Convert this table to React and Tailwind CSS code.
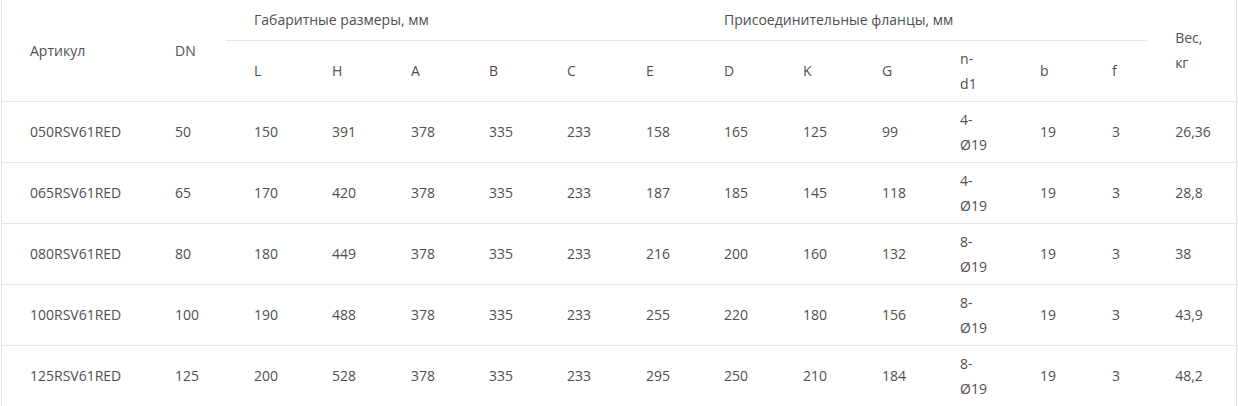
const widths = [145, 79, 78, 79, 78, 78, 79, 78, 79, 79, 78, 80, 72, 63, 89]

const rows = [
  ['050RSV61RED', '50', '150', '391', '378', '335', '233', '158', '165', '125', '99', '4-Ø19', '19', '3', '26,36'],
  ['065RSV61RED', '65', '170', '420', '378', '335', '233', '187', '185', '145', '118', '4-Ø19', '19', '3', '28,8'],
  ['080RSV61RED', '80', '180', '449', '378', '335', '233', '216', '200', '160', '132', '8-Ø19', '19', '3', '38'],
  ['100RSV61RED', '100', '190', '488', '378', '335', '233', '255', '220', '180', '156', '8-Ø19', '19', '3', '43,9'],
  ['125RSV61RED', '125', '200', '528', '378', '335', '233', '295', '250', '210', '184', '8-Ø19', '19', '3', '48,2'],
]

const subCols = ['L', 'H', 'A', 'B', 'C', 'E', 'D', 'K', 'G', 'n-d1', 'b', 'f']

const cell = 'px-7 text-left align-middle font-normal'

export default function App() {
  return (
    <div className="w-[1238px] h-[406px] overflow-hidden bg-white font-['Open_Sans',sans-serif] text-[14px] leading-[25px] text-[#4f4f4f]">
      <div className="ml-px w-[1236px] border-x border-[#e6e6e6]">
        <table className="w-[1234px] table-fixed border-collapse">
          <colgroup>
            {widths.map((w, i) => (
              <col key={i} style={{ width: w }} />
            ))}
          </colgroup>
          <thead>
            <tr>
              <th rowSpan={2} className={cell}>Артикул</th>
              <th rowSpan={2} className={cell}>DN</th>
              <th colSpan={6} className={`${cell} h-[40px] border-b border-[#e6e6e6]`}>
                Габаритные размеры, мм
              </th>
              <th colSpan={6} className={`${cell} h-[40px] border-b border-[#e6e6e6]`}>
                Присоединительные фланцы, мм
              </th>
              <th rowSpan={2} className={cell}>Вес, кг</th>
            </tr>
            <tr className="border-b border-[#e6e6e6]">
              {subCols.map((c) => (
                <th key={c} className={`${cell} h-[61px]`}>{c}</th>
              ))}
            </tr>
          </thead>
          <tbody>
            {rows.map((r) => (
              <tr key={r[0]} className="border-b border-[#e6e6e6]">
                {r.map((v, i) => (
                  <td key={i} className={`${cell} h-[61px]`}>{v}</td>
                ))}
              </tr>
            ))}
          </tbody>
        </table>
      </div>
    </div>
  )
}
